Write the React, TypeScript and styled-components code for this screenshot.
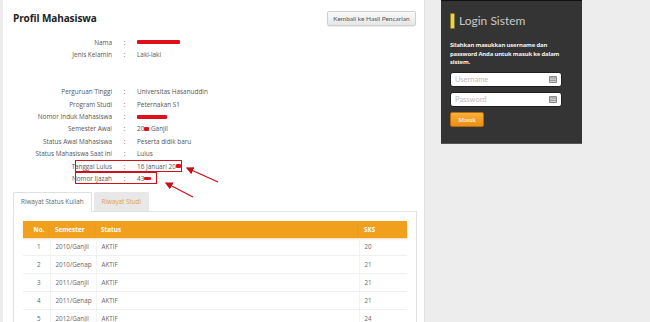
import React from "react";
import styled, { createGlobalStyle } from "styled-components";

const GlobalStyle = createGlobalStyle`
  html, body {
    margin: 0;
    padding: 0;
    background: #ededed;
    font-family: "Open Sans", "Liberation Sans", sans-serif;
    overflow: hidden;
  }
`;

interface ProfileRow {
  label: string;
  value?: React.ReactNode;
  boxWidth?: number;
}

interface StudyRow {
  no: number;
  semester: string;
  status: string;
  sks: number;
}

const Redact = ({ w, h }: { w: number; h: number }) => (
  <StyledRedact style={{ width: w, height: h }} />
);

const profileRows: (ProfileRow | null)[] = [
  { label: "Nama", value: <Redact w={43} h={4} /> },
  { label: "Jenis Kelamin", value: "Laki-laki" },
  null,
  null,
  { label: "Perguruan Tinggi", value: "Universitas Hasanuddin" },
  { label: "Program Studi", value: "Peternakan S1" },
  { label: "Nomor Induk Mahasiswa", value: <Redact w={30} h={4} /> },
  {
    label: "Semester Awal",
    value: (
      <>
        20<Redact w={5} h={4} />&nbsp;Ganjil
      </>
    ),
  },
  { label: "Status Awal Mahasiswa", value: "Peserta didik baru" },
  { label: "Status Mahasiswa Saat ini", value: "Lulus" },
  {
    label: "Tanggal Lulus",
    value: (
      <>
        16 Januari 20<Redact w={5} h={4} />
      </>
    ),
    boxWidth: 107,
  },
  {
    label: "Nomor Ijazah",
    value: (
      <>
        43<Redact w={7} h={3} />
      </>
    ),
    boxWidth: 82,
  },
];

const studyRows: StudyRow[] = [
  { no: 1, semester: "2010/Ganjil", status: "AKTIF", sks: 20 },
  { no: 2, semester: "2010/Genap", status: "AKTIF", sks: 21 },
  { no: 3, semester: "2011/Ganjil", status: "AKTIF", sks: 21 },
  { no: 4, semester: "2011/Genap", status: "AKTIF", sks: 21 },
  { no: 5, semester: "2012/Ganjil", status: "AKTIF", sks: 24 },
];

const FieldIcon = () => (
  <svg width="8" height="7" viewBox="0 0 8 7">
    <rect x="0" y="0" width="8" height="7" rx="1" fill="#8a8a8a" />
    <rect x="1" y="1.5" width="6" height="1" fill="#d8d8d8" />
    <rect x="1" y="3.2" width="6" height="1" fill="#d8d8d8" />
    <rect x="1" y="4.9" width="6" height="1" fill="#d8d8d8" />
  </svg>
);

const App: React.FC = () => {
  return (
    <>
      <GlobalStyle />
      <StyledPage>
        <StyledMain>
          <StyledHeader>
            <StyledTitle>Profil Mahasiswa</StyledTitle>
            <StyledBackButton>Kembali ke Hasil Pencarian</StyledBackButton>
          </StyledHeader>

          <StyledProfile>
            {profileRows.map((row, index) =>
              row ? (
                <StyledRow key={index}>
                  <StyledLabel>{row.label}</StyledLabel>
                  <StyledColon>:</StyledColon>
                  <StyledValue>{row.value}</StyledValue>
                  {row.boxWidth && <StyledMarkBox $w={row.boxWidth} />}
                </StyledRow>
              ) : (
                <StyledRow key={index} />
              )
            )}
            <StyledArrows width="240" height="180" viewBox="0 0 240 180">
              <defs>
                <marker
                  id="head"
                  markerWidth="6"
                  markerHeight="6"
                  refX="5"
                  refY="3"
                  orient="auto"
                >
                  <path d="M0,0 L6,3 L0,6 Z" fill="#c8101a" />
                </marker>
              </defs>
              <line
                x1="215"
                y1="146"
                x2="184"
                y2="132"
                stroke="#c8101a"
                strokeWidth="1.3"
                markerEnd="url(#head)"
              />
              <line
                x1="190"
                y1="161"
                x2="163"
                y2="147"
                stroke="#c8101a"
                strokeWidth="1.3"
                markerEnd="url(#head)"
              />
            </StyledArrows>
          </StyledProfile>

          <StyledTabs>
            <StyledTab $active>Riwayat Status Kuliah</StyledTab>
            <StyledTab>Riwayat Studi</StyledTab>
          </StyledTabs>
          <StyledTabPanel>
            <StyledTable>
              <thead>
                <tr>
                  <StyledTh $w={22} $center>
                    No.
                  </StyledTh>
                  <StyledTh $w={41}>Semester</StyledTh>
                  <StyledTh>Status</StyledTh>
                  <StyledTh $w={43}>SKS</StyledTh>
                </tr>
              </thead>
              <tbody>
                {studyRows.map((row) => (
                  <tr key={row.no}>
                    <StyledTd $center>{row.no}</StyledTd>
                    <StyledTd>{row.semester}</StyledTd>
                    <StyledTd>{row.status}</StyledTd>
                    <StyledTd>{row.sks}</StyledTd>
                  </tr>
                ))}
              </tbody>
            </StyledTable>
          </StyledTabPanel>
        </StyledMain>

        <StyledSidebar>
          <StyledLoginBox>
            <StyledLoginTitle>
              <StyledTitleBar />
              Login Sistem
            </StyledLoginTitle>
            <StyledLoginText>
              Silahkan masukkan username dan password Anda untuk masuk ke dalam
              sistem.
            </StyledLoginText>
            <StyledInputWrap>
              <StyledInput placeholder="Username" />
              <FieldIcon />
            </StyledInputWrap>
            <StyledInputWrap>
              <StyledInput placeholder="Password" type="password" />
              <FieldIcon />
            </StyledInputWrap>
            <StyledSubmit>Masuk</StyledSubmit>
          </StyledLoginBox>
        </StyledSidebar>
      </StyledPage>
    </>
  );
};

export default App;

const StyledPage = styled.div`
  display: flex;
  height: 322px;
  padding-left: 3px;
  overflow: hidden;
`;

const StyledMain = styled.div`
  width: 421px;
  height: 322px;
  flex-shrink: 0;
  overflow: hidden;
  background: #fff;
  border-right: 1px solid #e2e2e2;
`;

const StyledHeader = styled.div`
  display: flex;
  align-items: center;
  justify-content: space-between;
  height: 36px;
  padding: 0 8px 0 10px;
`;

const StyledTitle = styled.h2`
  margin: 0;
  font-family: "Open Sans", sans-serif;
  font-size: 10px;
  font-weight: 700;
  color: #222;
  letter-spacing: -0.1px;
`;

const StyledBackButton = styled.button`
  width: 89px;
  height: 15px;
  padding: 0;
  font-family: "Lato", sans-serif;
  font-size: 6.5px;
  color: #555;
  background: linear-gradient(#fafafa, #e6e6e6);
  border: 1px solid #cfcfcf;
  border-radius: 2px;
  box-shadow: 0 1px 1px rgba(0, 0, 0, 0.08);
`;

const StyledProfile = styled.div`
  position: relative;
`;

const StyledRow = styled.div`
  display: grid;
  grid-template-columns: 109px 24px auto;
  height: 12.4px;
  align-items: center;
  font-size: 6.4px;
  color: #555;
  position: relative;
`;

const StyledMarkBox = styled.span<{ $w: number }>`
  position: absolute;
  left: 72px;
  top: 0;
  width: ${({ $w }) => $w}px;
  height: 12px;
  box-sizing: border-box;
  border: 1.5px solid #d0101a;
`;

const StyledLabel = styled.span`
  text-align: right;
  white-space: nowrap;
`;

const StyledColon = styled.span`
  text-align: center;
  padding-left: 1px;
`;

const StyledValue = styled.span`
  padding-left: 1px;
  white-space: nowrap;
  display: flex;
  align-items: center;
`;

const StyledRedact = styled.span`
  display: inline-block;
  background: #e0101a;
  border-radius: 1px;
`;

const StyledArrows = styled.svg`
  position: absolute;
  left: 0;
  top: 0;
  pointer-events: none;
  overflow: visible;
`;

const StyledTabs = styled.div`
  display: flex;
  gap: 2px;
  margin: 7px 0 0 10px;
  height: 19px;
  position: relative;
  z-index: 1;
`;

const StyledTab = styled.div<{ $active?: boolean }>`
  display: flex;
  align-items: center;
  padding: 0 7px;
  font-size: 6.3px;
  color: ${({ $active }) => ($active ? "#666" : "#dc9f50")};
  background: ${({ $active }) => ($active ? "#fff" : "#e8e8e8")};
  border: 1px solid ${({ $active }) => ($active ? "#e0e0e0" : "#e8e8e8")};
  border-bottom: ${({ $active }) => ($active ? "1px solid #fff" : "none")};
  border-radius: 2px 2px 0 0;
  box-sizing: border-box;
  height: ${({ $active }) => ($active ? "20px" : "19px")};
`;

const StyledTabPanel = styled.div`
  margin: 0 7px 0 10px;
  border: 1px solid #e2e2e2;
  border-bottom: none;
  padding: 9px 9px 0;
  height: 120px;
`;

const StyledTable = styled.table`
  width: 100%;
  border-collapse: collapse;
  font-size: 6.3px;
  color: #666;
`;

const StyledTh = styled.th<{ $w?: number; $center?: boolean }>`
  height: 17px;
  padding: 0 0 0 5px;
  background: #f0a01c;
  color: #fff;
  font-weight: 700;
  text-align: ${({ $center }) => ($center ? "center" : "left")};
  width: ${({ $w }) => ($w ? `${$w}px` : "auto")};
  box-shadow: 0 1px 2px rgba(200, 130, 0, 0.3);
`;

const StyledTd = styled.td<{ $center?: boolean }>`
  height: 17px;
  padding: 0 0 0 5px;
  text-align: ${({ $center }) => ($center ? "center" : "left")};
  border-bottom: 1px solid #f0f0f0;
  border-right: 1px solid #f3f3f3;
  &:last-child {
    border-right: none;
  }
`;

const StyledSidebar = styled.div`
  padding-left: 16px;
`;

const StyledLoginBox = styled.div`
  width: 141px;
  height: 144px;
  box-sizing: border-box;
  background: #343434;
  border-top: 1px solid #111;
  border-bottom: 1px solid #555;
  padding: 12px 9px 0;
  display: flex;
  flex-direction: column;
`;

const StyledLoginTitle = styled.div`
  display: flex;
  align-items: center;
  gap: 4px;
  font-family: "Lato", sans-serif;
  font-size: 12px;
  color: #c8c8c8;
  height: 15px;
`;

const StyledTitleBar = styled.span`
  width: 3px;
  height: 14px;
  background: #e8d35e;
  border: 0.5px solid #8a7a20;
  border-radius: 1px;
`;

const StyledLoginText = styled.p`
  margin: 13px 0 0;
  font-family: "Open Sans", sans-serif;
  font-size: 5.9px;
  line-height: 8.5px;
  font-weight: 700;
  color: #f2f2f2;
  letter-spacing: -0.15px;
`;

const StyledInputWrap = styled.div`
  display: flex;
  align-items: center;
  width: 112px;
  height: 15px;
  box-sizing: border-box;
  margin-top: 5px;
  padding: 0 4px;
  background: #fff;
  border: 1px solid #1f1f1f;
  border-radius: 3px;

  &:first-of-type {
    margin-top: 8px;
  }
`;

const StyledInput = styled.input`
  flex: 1;
  min-width: 0;
  border: none;
  outline: none;
  padding: 0;
  font-family: "Lato", sans-serif;
  font-size: 7.5px;
  color: #555;
  background: transparent;

  &::placeholder {
    color: #bbb;
  }
`;

const StyledSubmit = styled.button`
  margin-top: 5px;
  width: 34px;
  height: 15px;
  padding: 0;
  font-family: "Liberation Serif", serif;
  font-size: 6.5px;
  color: #fff;
  background: linear-gradient(#f7b03a, #ec8e12);
  border: 1px solid #b66a0a;
  border-radius: 2px;
`;
